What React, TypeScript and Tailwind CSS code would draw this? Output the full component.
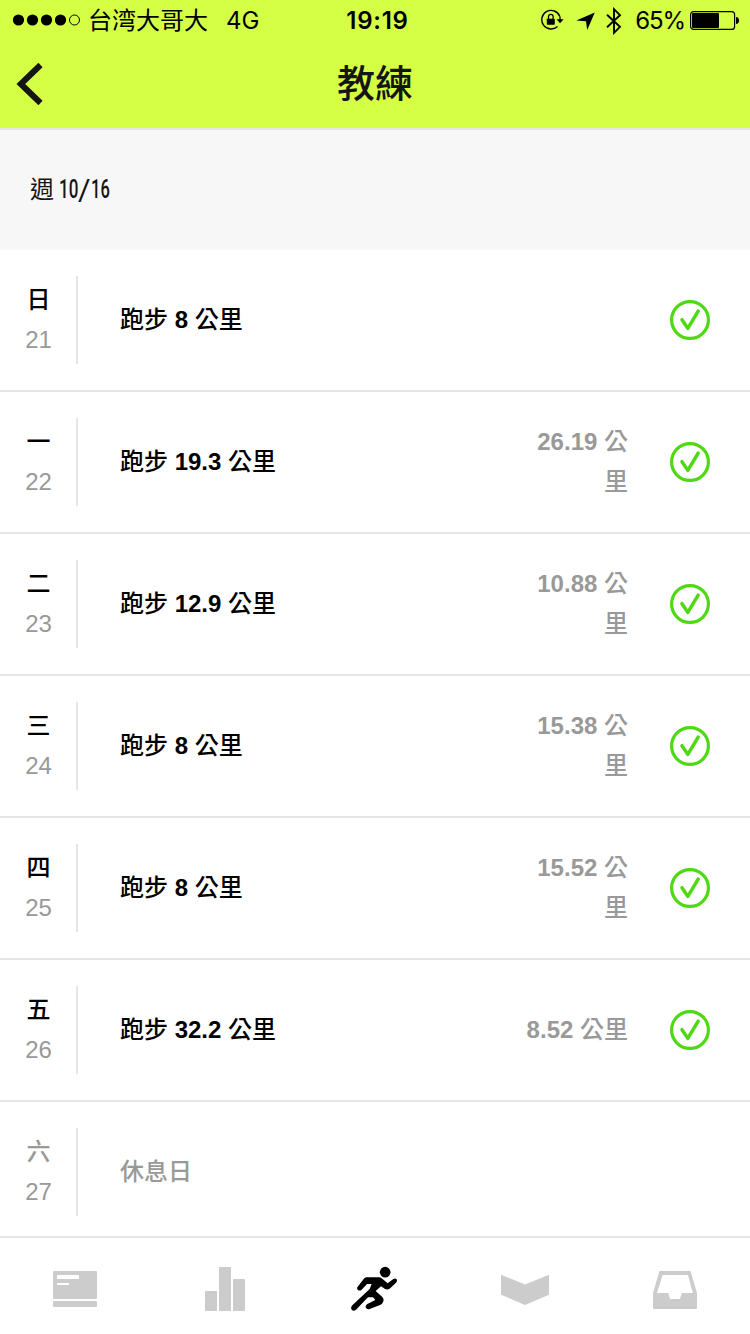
import React from 'react';

interface Workout {
  day: string;
  date: number;
  km?: string;
  distance?: string;
}

const WORKOUTS: Workout[] = [
  { day: '日', date: 21, km: '8' },
  { day: '一', date: 22, km: '19.3', distance: '26.19' },
  { day: '二', date: 23, km: '12.9', distance: '10.88' },
  { day: '三', date: 24, km: '8', distance: '15.38' },
  { day: '四', date: 25, km: '8', distance: '15.52' },
  { day: '五', date: 26, km: '32.2', distance: '8.52' },
  { day: '六', date: 27 },
];

const StatusBar: React.FC = () => (
  <div className="grid h-[42px] grid-cols-[1fr_auto_1fr] items-center pl-3 pr-[11px] text-2xl leading-10 text-black font-['Inter','Noto_Sans_CJK_SC',sans-serif]">
    <div className="flex items-center whitespace-nowrap">
      <svg width="70" height="14" viewBox="0 0 70 14" className="mr-1.5 -mt-0.5">
        <circle cx="6.5" cy="7" r="5.6" />
        <circle cx="20.5" cy="7" r="5.6" />
        <circle cx="34.5" cy="7" r="5.6" />
        <circle cx="48.5" cy="7" r="5.6" />
        <circle cx="62.5" cy="7" r="5" fill="none" stroke="#000" strokeWidth="1" />
      </svg>
      <span>台湾大哥大</span>
      <span className="ml-[18px]">4G</span>
    </div>
    <span className="pl-1 font-semibold tracking-[0.03em]">19:19</span>
    <div className="flex items-center justify-end">
      <svg width="24" height="22" viewBox="0 0 24 22" className="mr-3 -mt-0.5">
        <path d="M19.8 7.5A9.3 9.3 0 1 0 17.5 17.4" fill="none" stroke="#000" strokeWidth="1.4" />
        <path d="M20 7.5v4" stroke="#000" strokeWidth="1.4" />
        <path d="M16.5 10.2h7.2L20 14.2z" />
        <rect x="6.8" y="9.7" width="8" height="6" rx="0.6" />
        <path d="M8.5 10V7.6a2.3 2.3 0 0 1 4.6 0V10" fill="none" stroke="#000" strokeWidth="1.3" />
      </svg>
      <svg width="20" height="20" viewBox="0 0 20 20" className="mr-2.5">
        <path d="M18.8 1.5 11.2 19 10 10.2 .3 9.4z" />
      </svg>
      <svg width="16" height="28" viewBox="0 0 16 28" className="mr-[13px]">
        <path d="M1 7.8 14 19.8 8 25.8V2.2l6 6L1 20.2" fill="none" stroke="#000" strokeWidth="1.9" />
      </svg>
      <span className="tracking-[-0.045em]">65%</span>
      <svg width="49" height="20" viewBox="0 0 49 20" className="ml-[5px] shrink-0">
        <rect x="0.6" y="0.6" width="44" height="17.8" rx="3" fill="none" stroke="#000" strokeWidth="1.2" />
        <rect x="2" y="2" width="27" height="15" rx="1" />
        <path d="M46 6c2 0 3 1.500 3 3.500s-1 3.500-3 3.500z" />
      </svg>
    </div>
  </div>
);

const CheckIcon: React.FC = () => (
  <svg width="40" height="40" viewBox="0 0 40 40" fill="none" stroke="#4fd814">
    <circle cx="20" cy="20" r="18.4" strokeWidth="3.2" />
    <path d="M12 19.700 17.8 28.4 28.200 11.2" strokeWidth="3.5" strokeLinecap="round" strokeLinejoin="round" />
  </svg>
);

const WorkoutRow: React.FC<{ workout: Workout }> = ({ workout }) => {
  const { day, date, km, distance } = workout;

  return (
    <li className="flex h-[142px] shrink-0 items-center border-b-2 border-[#e5e5e5] font-medium">
      <div className="flex h-[88px] w-[78px] flex-col items-center justify-center border-r-2 border-[#e5e5e5] pl-px leading-10">
        <span className={km ? 'text-black' : 'text-[#999]'}>{day}</span>
        <span className="font-normal text-[#999]">{date}</span>
      </div>
      {km ? (
        <p className="ml-[42px] flex-1">
          跑步 <b>{km}</b> 公里
        </p>
      ) : (
        <p className="ml-[42px] flex-1 text-[#999]">休息日</p>
      )}
      {distance && (
        <p className="mr-[42px] w-[108px] text-right leading-10 text-[#999]">
          <b>{distance}</b> 公里
        </p>
      )}
      <div className="mr-10 w-10">{km && <CheckIcon />}</div>
    </li>
  );
};

const TabBar: React.FC = () => (
  <nav className="grid h-[98px] shrink-0 grid-cols-5 justify-items-center border-t-2 border-[#e5e5e5] bg-white pt-[27px] text-[#ccc]">
    <svg width="48" height="48" viewBox="0 0 48 48" fill="currentColor">
      <rect x="2" y="6" width="44" height="28" rx="1" />
      <rect x="2" y="36" width="44" height="6" rx="1" />
      <path d="M6 10h22v4H6zM6 18h12v2H6z" fill="#fff" />
    </svg>
    <svg width="48" height="48" viewBox="0 0 48 48" fill="currentColor">
      <rect x="4" y="26" width="12" height="20" rx="0.7" />
      <rect x="18" y="2" width="12" height="44" rx="0.7" />
      <rect x="32" y="14" width="12" height="32" rx="0.7" />
    </svg>
    <svg width="48" height="48" viewBox="18 15 144 144" fill="#000">
      <circle cx="120.500" cy="36.500" r="16" />
      <path d="M37 82 56 57Q59 52 65 52H102Q106 52 110 55L128 70 145 57Q151 53 155 58 158 63 153 68L134 86Q128 90 120 87L108 79 92 93 112 111Q120 120 111 131L107 134 74 147Q65 150 62 142 61 136 67 132L91 120 84 112H69L33 149Q26 155 20 149 16 142 22 136L74 87 80 72H66L50 89Q44 94 38 89 35 85 37 82z" />
    </svg>
    <svg width="48" height="48" viewBox="0 0 48 48" fill="currentColor">
      <path d="M0 9.700 24 19.500 48 9.700V29.700L24 40 0 29.700z" />
    </svg>
    <svg width="48" height="48" viewBox="0 0 48 48" fill="currentColor">
      <path
        fillRule="evenodd"
        d="M8.500 6H39.500L46 28V43q0 1-1 1H3q-1 0-1-1V28zM11.500 10 6 28H17.300L19 34H29L30.700 28H41.800L37 10z"
      />
    </svg>
  </nav>
);

const App: React.FC = () => {
  return (
    <div className="flex h-[1334px] w-[750px] flex-col overflow-hidden bg-white text-2xl text-black font-['Liberation_Sans','Noto_Sans_CJK_TC',sans-serif]">
      <header className="h-[130px] shrink-0 border-b-2 border-[#e5e5e5] bg-[#d4ff45]">
        <StatusBar />
        <div className="grid h-[84px] grid-cols-3 items-center">
          <button className="ml-4 w-7">
            <svg width="28" height="44" viewBox="0 0 28 44" fill="none" stroke="#151515" strokeWidth="6">
              <path d="M24.500 3 4.800 22 24.500 41" />
            </svg>
          </button>
          <h1 className="text-center text-[38px] leading-[82px] font-medium text-[#151515]">教練</h1>
        </div>
      </header>

      <div className="flex h-[120px] shrink-0 items-center bg-[#f7f7f7] pl-[30px] text-[#151515]">
        <span>週</span>
        <div className="ml-[5px] flex items-center text-[25px] font-medium font-['Roboto',sans-serif]">
          <span className="w-[19px] origin-left scale-x-[0.68]">10</span>
          <span className="w-[13px] origin-left scale-x-[1.05] text-[29px] font-normal">/</span>
          <span className="w-[19px] origin-left scale-x-[0.66]">16</span>
        </div>
      </div>

      <ul className="flex min-h-0 flex-1 flex-col overflow-hidden">
        {WORKOUTS.map((workout) => (
          <WorkoutRow key={workout.date} workout={workout} />
        ))}
      </ul>

      <TabBar />
    </div>
  );
};

export default App;
